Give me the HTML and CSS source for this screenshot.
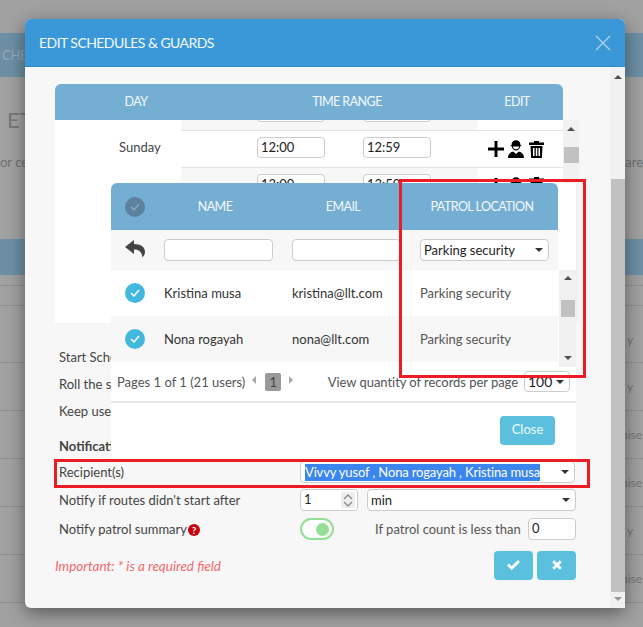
FILE: index.html
```html
<!DOCTYPE html>
<html lang="en">
<head>
    <meta charset="UTF-8">
    <title>Edit schedules &amp; guards</title>
    <link rel="stylesheet" href="styles.css">
</head>
<body>

<div class="page">
    <div class="page-tabs">CHEDULES</div>
    <div class="page-title">ETAILS</div>
    <div class="page-note"><span>or cer</span><span>s are</span></div>
    <div class="page-head"></div>
    <div class="page-row row-a"></div>
    <div class="page-row row-b"></div>
    <div class="page-row row-c row-y"><span>y</span></div>
    <div class="page-row row-y"><span>y</span></div>
    <div class="page-row"><span>nise</span></div>
    <div class="page-row"><span>nise</span></div>
    <div class="page-row row-y"><span>y</span></div>
    <div class="page-row"><span>nise</span></div>
</div>

<div class="modal">
    <div class="modal-header">
        <span>EDIT SCHEDULES &amp; GUARDS</span>
        <svg class="modal-close" width="16" height="16" viewBox="0 0 16 16"><path d="M1 1l14 14M15 1L1 15" stroke="#a9d3ef" stroke-width="1.4" fill="none"/></svg>
    </div>
    <div class="modal-body">
        <div class="modal-content">
            <div class="sched-head">
                <div>DAY</div>
                <div>TIME RANGE</div>
                <div>EDIT</div>
            </div>
            <div class="sched-body">
                <div class="sched-day">Sunday</div>
                <div class="sched-rows">
                    <div class="sched-row row-cut-top">
                        <div class="time-cell"><span class="field"></span></div>
                        <div class="time-cell"><span class="field"></span></div>
                        <div class="edit-cell"></div>
                    </div>
                    <div class="sched-row row-white">
                        <div class="time-cell"><span class="field">12:00</span></div>
                        <div class="time-cell"><span class="field">12:59</span></div>
                        <div class="edit-cell">
                            <svg width="16" height="16" viewBox="0 0 16 16"><path d="M6.500 0h3v6.500h6.500v3h-6.500v6.500h-3v-6.500h-6.500v-3h6.500z"/></svg>
                            <svg width="18" height="18" viewBox="0 0 18 18"><path d="M4.500 5.200C4.500 2 6.500.3 9 .3s4.500 1.700 4.500 4.900h.8v1h-1.100c-.3 2.600-2 4.300-4.200 4.300S5.100 8.800 4.800 6.200H3.700v-1z"/><path d="M5.800 6.400h6.400c0 1-1 2.800-3.200 2.800S5.800 7.400 5.800 6.400z" fill="#fff"/><path d="M1 18c0-3.800 2-5.800 5.200-6.600L9 14l2.800-2.600C15 12.200 17 14.200 17 18z"/></svg>
                            <svg width="17" height="17" viewBox="0 0 17 17"><path d="M6 0h5v1.500h5V4H1V1.500h5zM2.500 5h12l-.6 12H3.100zM5 7v8h1.500V7zM7.800 7v8h1.500V7zM10.500 7v8H12V7z" fill-rule="evenodd"/></svg>
                        </div>
                    </div>
                    <div class="sched-row">
                        <div class="time-cell"><span class="field">13:00</span></div>
                        <div class="time-cell"><span class="field">13:59</span></div>
                        <div class="edit-cell">
                            <svg width="16" height="16" viewBox="0 0 16 16"><path d="M6.500 0h3v6.500h6.500v3h-6.500v6.500h-3v-6.500h-6.500v-3h6.500z"/></svg>
                            <svg width="18" height="18" viewBox="0 0 18 18"><path d="M4.500 5.200C4.500 2 6.500.3 9 .3s4.500 1.700 4.500 4.900h.8v1h-1.100c-.3 2.600-2 4.300-4.200 4.300S5.100 8.800 4.800 6.200H3.700v-1z"/></svg>
                            <svg width="17" height="17" viewBox="0 0 17 17"><path d="M6 0h5v1.500h5V4H1V1.500h5zM2.500 5h12l-.6 12H3.100z"/></svg>
                        </div>
                    </div>
                </div>
                <div class="scrollbar sched-scroll">
                    <i class="arrow-up"></i>
                    <b class="thumb"></b>
                </div>
            </div>

            <div class="opt-row opt-first">Start Schedule</div>
            <div class="opt-row">Roll the schedule</div>
            <div class="opt-row">Keep users</div>
            <div class="opt-title">Notifications</div>

            <div class="form-row recipients">
                <label>Recipient(s)</label>
                <div class="select select-wide"><span class="selected-text">Vivvy yusof , Nona rogayah , Kristina musa</span><i class="caret"></i></div>
            </div>
            <div class="form-row routes">
                <label>Notify if routes didn't start after</label>
                <div class="field number">1
                    <span class="spinner">
                        <svg width="10" height="6" viewBox="0 0 10 6"><path d="M1 5l4-4 4 4" fill="none" stroke="#8a8a8a" stroke-width="1.300"/></svg>
                        <svg width="10" height="6" viewBox="0 0 10 6"><path d="M1 1l4 4 4-4" fill="none" stroke="#8a8a8a" stroke-width="1.300"/></svg>
                    </span>
                </div>
                <div class="select select-unit"><span>min</span><i class="caret"></i></div>
            </div>
            <div class="form-row summary">
                <label>Notify patrol summary
                    <svg class="help" width="12" height="12" viewBox="0 0 12 12"><circle cx="6" cy="6" r="6" fill="#c8000a"/><text x="6" y="9.500" text-anchor="middle" class="help-mark">?</text></svg>
                </label>
                <div class="toggle"><i></i></div>
                <span class="count-label">If patrol count is less than</span>
                <div class="field count">0</div>
            </div>
            <div class="form-foot">
                <em>Important: * is a required field</em>
                <div class="foot-btns">
                    <button class="btn-icon"><svg width="13" height="11" viewBox="0 0 13 11"><path d="M1 5.500l3.700 3.700L12 2" fill="none" stroke="#fff" stroke-width="2.800"/></svg></button>
                    <button class="btn-icon"><svg width="10" height="10" viewBox="0 0 10 10"><path d="M1.200 1.200l7.600 7.600M8.800 1.200L1.200 8.800" fill="none" stroke="#fff" stroke-width="2.800"/></svg></button>
                </div>
            </div>
        </div>
        <div class="scrollbar modal-scroll">
            <i class="arrow-up"></i>
            <b class="thumb"></b>
            <i class="arrow-down"></i>
        </div>
    </div>

    <div class="popup">
        <div class="popup-head">
            <div class="check-cell"><span class="round-check dim"><svg width="10" height="8" viewBox="0 0 10 8"><path d="M1 4l3 3 5-6" fill="none" stroke="#8fa9bb" stroke-width="1.300"/></svg></span></div>
            <div>NAME</div>
            <div>EMAIL</div>
            <div>PATROL LOCATION</div>
        </div>
        <div class="popup-grid popup-filter">
            <div class="check-cell"><svg width="20" height="18" viewBox="0 0 20 18"><path d="M9 0L0 7l9 7V9.500c4.500 0 7.500 1.500 8.500 8 1.500-1.500 2.500-3.500 2.500-5.500 0-5-4-8-11-8z" fill="#444"/></svg></div>
            <div><span class="field filter-input"></span></div>
            <div><span class="field filter-input"></span></div>
            <div><div class="select filter-select"><span>Parking security</span><i class="caret"></i></div></div>
        </div>
        <div class="popup-list">
            <div class="popup-rows">
                <div class="popup-grid popup-row">
                    <div class="check-cell"><span class="round-check"><svg width="10" height="8" viewBox="0 0 10 8"><path d="M1 4l3 3 5-6" fill="none" stroke="#fff" stroke-width="1.500"/></svg></span></div>
                    <div>Kristina musa</div>
                    <div>kristina@llt.com</div>
                    <div class="location">Parking security</div>
                </div>
                <div class="popup-grid popup-row row-grey">
                    <div class="check-cell"><span class="round-check"><svg width="10" height="8" viewBox="0 0 10 8"><path d="M1 4l3 3 5-6" fill="none" stroke="#fff" stroke-width="1.500"/></svg></span></div>
                    <div>Nona rogayah</div>
                    <div>nona@llt.com</div>
                    <div class="location">Parking security</div>
                </div>
            </div>
            <div class="scrollbar popup-scroll">
                <i class="arrow-up"></i>
                <b class="thumb"></b>
                <i class="arrow-down"></i>
            </div>
        </div>
        <div class="pager">
            <span>Pages 1 of 1 (21 users)</span>
            <i class="arrow-left"></i>
            <span class="page-num">1</span>
            <i class="arrow-right"></i>
            <span class="per-page">View quantity of records per page</span>
            <div class="select per-select"><span>100</span><i class="caret"></i></div>
        </div>
        <div class="popup-foot">
            <button class="btn-close">Close</button>
        </div>
    </div>
</div>

<div class="mark mark-location"></div>
<div class="mark mark-recipient"></div>

</body>
</html>
```

FILE: styles.css
```css
* { box-sizing: border-box; }

body {
    margin: 0;
    width: 643px;
    height: 627px;
    overflow: hidden;
    background: #a1a1a1;
    font-family: Lato, "Noto Sans", sans-serif;
    font-size: 13px;
    color: #444;
}

/* page behind the dimmed layer */
.page { height: 627px; padding-top: 33px; color: #707070; }
.page-tabs {
    height: 44px;
    line-height: 44px;
    padding-left: 2px;
    background: #6d8fa5;
    color: #93a8b6;
    font-size: 13px;
    letter-spacing: -.3px;
}
.page-title { margin-top: 25px; padding-left: 7px; height: 36px; line-height: 36px; font-size: 22px; color: #777; }
.page-note { display: flex; justify-content: space-between; margin-top: 14px; height: 20px; line-height: 20px; }
.page-head { margin-top: 67px; height: 36px; background: #6d8fa5; }
.page-row { height: 48px; border-bottom: 1px solid #8f8f8f; line-height: 48px; padding-left: 621px; font-size: 12px; color: #747474; white-space: nowrap; }
.row-y { padding-left: 627px; }
.row-a { height: 11px; }
.row-b { height: 20px; }
.row-c { height: 57px; line-height: 68px; }

.modal {
    position: absolute;
    left: 25px;
    top: 19px;
    width: 600px;
    height: 589px;
    background: #f7f7f7;
    border-radius: 6px;
    box-shadow: 0 5px 18px rgba(0,0,0,0.45);
}
.modal-header {
    display: flex;
    justify-content: space-between;
    align-items: center;
    height: 48px;
    padding: 0 14px;
    background: #3a98d8;
    border-bottom: 1px solid #3489c2;
    border-radius: 6px 6px 0 0;
    color: #f4f9fd;
    font-size: 14px;
    letter-spacing: -.55px;
}
.modal-body { display: flex; height: 541px; }
.modal-content { flex: 1; padding: 17px 0 0 30px; }

.scrollbar { display: flex; flex-direction: column; align-items: center; background: #f1f1f1; }
.thumb { display: block; background: #c1c1c1; }
.arrow-up, .arrow-down, .caret { display: block; width: 0; height: 0; border-left: 4px solid transparent; border-right: 4px solid transparent; }
.arrow-up { border-bottom: 4px solid #505050; }
.arrow-down { border-top: 4px solid #505050; }
.caret { border-top: 4px solid #333; border-left-width: 4.500px; border-right-width: 4.500px; }

.modal-scroll { width: 15px; }
.modal-scroll .arrow-up { margin-top: 8px; }
.modal-scroll .thumb { width: 14px; height: 413px; margin-top: 100px; }
.modal-scroll .arrow-down { margin-top: 5px; border-top-color: #999; }

/* schedule table */
.sched-head {
    display: grid;
    grid-template-columns: 162px 260px 86px;
    width: 508px;
    height: 36px;
    line-height: 36px;
    text-align: center;
    background: #75aed3;
    border-radius: 6px 6px 0 0;
    color: #f4f9fd;
    font-size: 12.500px;
    letter-spacing: -.55px;
}
.sched-head div:last-child { padding-right: 6px; }
.sched-body { display: flex; width: 524px; height: 203px; overflow: hidden; }
.sched-day { width: 126px; background: #fff; padding: 19px 0 0 64px; }
.sched-rows { width: 382px; }
.sched-row { display: flex; height: 36px; background: #f7f7f7; border-top: 1px solid #e4e4e4; }
.row-cut-top { height: 11px; border-top: 0; border-bottom: 1px solid #e4e4e4; overflow: hidden; }
.row-white { background: #fff; border-top: 0; }
.time-cell { flex: none; width: 114px; padding-top: 6px; }
.time-cell:first-child { width: 182px; padding-left: 76px; }
.time-cell .field { width: 68px; height: 21px; }
.row-cut-top .time-cell { padding-top: 0; }
.row-cut-top .field { margin-top: -19px; }
.field {
    display: block;
    background: #fff;
    border: 1px solid #ccc;
    border-radius: 4px;
    padding: 0 3px;
    line-height: 19px;
    color: #222;
    font-size: 13px;
}
.edit-cell { display: flex; flex: 1; gap: 3px; align-items: center; padding-left: 11px; background: #fff; }
.sched-scroll { width: 16px; }
.sched-scroll .arrow-up { margin-top: 7px; }
.sched-scroll .thumb { width: 15px; height: 16px; margin-top: 16px; }

/* settings under the table */
.opt-row { height: 27px; line-height: 27px; padding-left: 4px; }
.opt-first { margin-top: 21px; }
.opt-title { font-weight: 700; padding-left: 4px; margin-top: 11px; height: 20px; line-height: 20px; }

.form-row { display: flex; align-items: center; width: 521px; padding-left: 4px; }
.form-row label { flex: none; width: 241px; }
.recipients { height: 22px; margin-top: 5px; }
.routes { height: 22px; margin-top: 6px; }
.summary { height: 23px; margin-top: 6px; }

.select {
    display: flex;
    justify-content: space-between;
    align-items: center;
    height: 22px;
    background: #fff;
    border: 1px solid #ccc;
    border-radius: 4px;
    padding: 0 5px 0 3px;
    color: #222;
}
.select-wide { width: 275px; }
.selected-text { margin-left: 1px; background: #3a86ee; color: #fff; line-height: 17px; letter-spacing: -.15px; white-space: nowrap; }
.number { position: relative; width: 58px; height: 22px; }
.spinner { position: absolute; right: 2px; top: 2px; display: flex; flex-direction: column; align-items: center; justify-content: center; gap: 1px; width: 14px; height: 16px; background: #eee; }
.select-unit { width: 209px; margin-left: 9px; }
.help { vertical-align: -2px; margin-left: -2px; }
.help-mark { font-size: 10px; font-weight: 700; fill: #fff; }
.toggle { width: 34px; height: 22px; border: 2px solid #93df96; border-radius: 11px; background: #fff; padding: 3px 3px 3px 14px; }
.toggle i { display: block; width: 13px; height: 13px; border-radius: 50%; background: #93df96; }
.count-label { width: 153px; margin-left: 41px; color: #555; white-space: nowrap; }
.count { width: 48px; height: 22px; }

.form-foot { display: flex; justify-content: space-between; align-items: center; width: 521px; margin-top: 11px; }
.form-foot em { color: #f06a6e; font-size: 13.500px; }
.foot-btns { display: flex; gap: 4px; }
.btn-icon { width: 39px; height: 29px; border: none; border-radius: 4px; background: #5bc0de; padding: 0; }

/* nested user picker */
.popup {
    position: absolute;
    left: 86px;
    top: 164px;
    width: 465px;
    height: 275px;
    background: #fff;
}
.popup-head {
    display: grid;
    grid-template-columns: 53px 102px 154px 138px;
    align-items: center;
    width: 447px;
    height: 47px;
    background: #75aed3;
    border-radius: 6px 6px 0 0;
    color: #f4f9fd;
    font-size: 12.500px;
    letter-spacing: -.55px;
    text-align: center;
}
.popup-head div:last-child { padding-right: 14px; }
.popup-grid { display: grid; grid-template-columns: 53px 128px 128px 138px; align-items: center; width: 447px; }
.popup-head .check-cell, .popup-grid .check-cell { padding-left: 14px; text-align: left; }
.popup-filter { height: 40px; background: #f7f7f7; }
.filter-input { width: 109px; height: 22px; }
.filter-select { width: 129px; height: 22px; }
.round-check { display: inline-flex; width: 20px; height: 20px; border-radius: 50%; background: #42b8de; align-items: center; justify-content: center; vertical-align: middle; }
.round-check.dim { background: #5a829e; }
.popup-list { display: flex; height: 97px; }
.popup-rows { width: 447px; margin-right: 1px; }
.popup-row { height: 46px; color: #333; }
.location { color: #555; }
.row-grey { background: #f7f7f7; }
.popup-scroll { width: 17px; height: 97px; }
.popup-scroll .arrow-up { margin-top: 6px; }
.popup-scroll .thumb { width: 14px; height: 17px; margin-top: 20px; }
.popup-scroll .arrow-down { margin-top: 39px; }

.pager { position: relative; display: flex; align-items: center; width: 465px; height: 41px; margin-top: -5px; padding: 0 6px; border-bottom: 2px solid #e8e8e8; color: #555; white-space: nowrap; }
.arrow-left { width: 0; height: 0; border-top: 4px solid transparent; border-bottom: 4px solid transparent; border-right: 4px solid #a8a8a8; margin: 0 9px 4px 7px; }
.arrow-right { width: 0; height: 0; border-top: 4px solid transparent; border-bottom: 4px solid transparent; border-left: 4px solid #a8a8a8; margin: 0 0 4px 8px; }
.page-num { width: 16px; height: 18px; line-height: 18px; text-align: center; background: #999; color: #444; border-radius: 2px; }
.per-page { margin-left: auto; letter-spacing: -.05px; }
.per-select { width: 46px; height: 21px; margin-left: 6px; font-size: 14px; }
.popup-foot { display: flex; justify-content: flex-end; padding: 13px 21px 0 0; }
.btn-close { width: 55px; height: 29px; border: none; border-radius: 4px; background: #5bc0de; color: #f2fafd; font: inherit; padding: 0 0 3px; }

/* red markers drawn on the screenshot */
.mark { position: absolute; border: 3px solid #ee1c25; }
.mark-location { left: 399px; top: 179px; width: 187px; height: 199px; }
.mark-recipient { left: 54px; top: 459px; width: 536px; height: 29px; }
```
